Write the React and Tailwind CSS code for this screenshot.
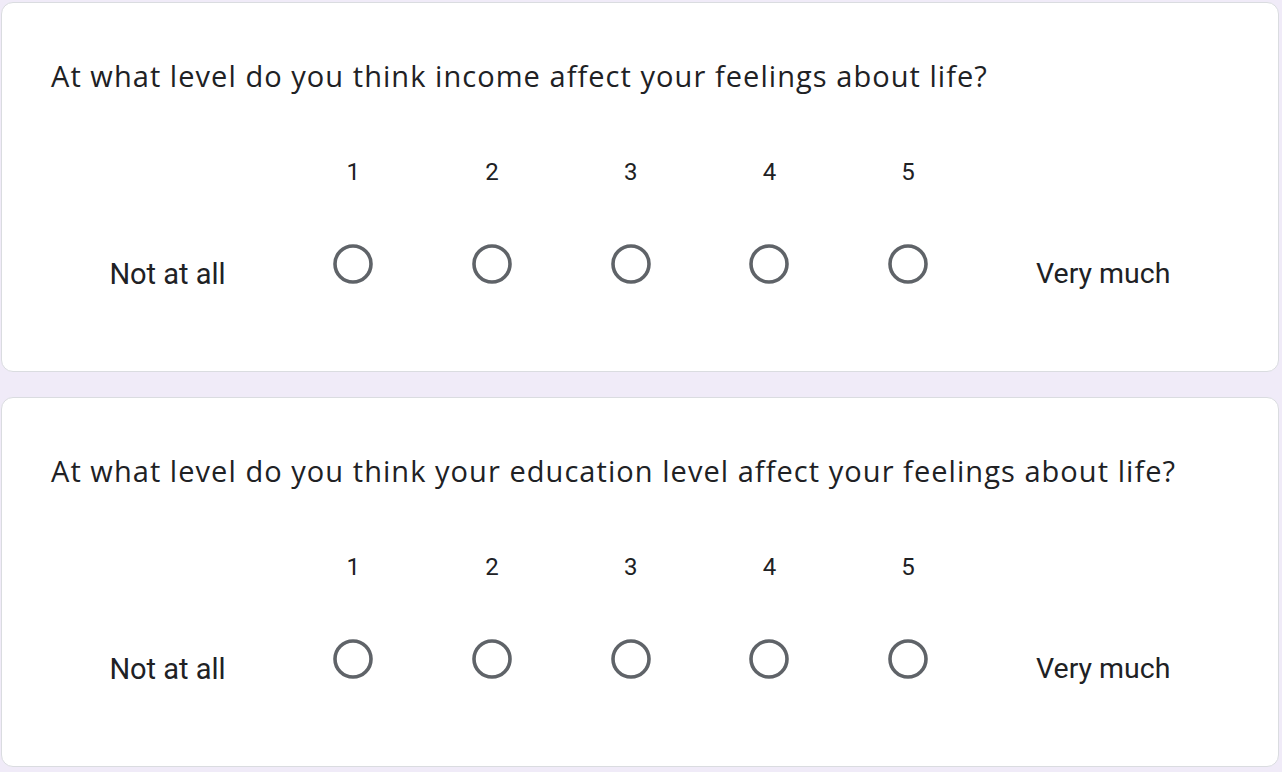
import React from "react";

const questions = [
    "At what level do you think income affect your feelings about life?",
    "At what level do you think your education level affect your feelings about life?",
];

function Radio() {
    return (
        <svg width="40" height="40" viewBox="0 0 40 40" className="block">
            <circle cx="20" cy="20" r="18" fill="none" stroke="#5f6368" strokeWidth="3.6" />
        </svg>
    );
}

function ScaleCard({ title }) {
    return (
        <div className="bg-white border border-[#dadce0] rounded-xl px-[49px] pt-[53px] pb-[81px]">
            <div className="text-[29px] leading-[40px] tracking-[1.05px] text-[#202124] font-['Open_Sans',sans-serif]">{title}</div>
            <div className="flex items-start mt-[60px] font-['Roboto',sans-serif] text-[#202124]">
                <div className="w-[233px] pt-[102px] text-[29px] leading-[32px] text-center">Not at all</div>
                {[1, 2, 3, 4, 5].map((n) => (
                    <div key={n} className="w-[138.7px] flex flex-col items-center">
                        <div className="text-[24px] leading-[32px]">{n}</div>
                        <div className="mt-[56px]">
                            <Radio />
                        </div>
                    </div>
                ))}
                <div className="flex-1 pt-[102px] text-[28.5px] leading-[32px] text-center">Very much</div>
            </div>
        </div>
    );
}

export default function App() {
    return (
        <div className="min-h-screen bg-[#f0ebf8] pt-[2px] pl-[1px] pr-[3px] pb-[4px]">
            <ScaleCard title={questions[0]} />
            <div className="mt-[25px]">
                <ScaleCard title={questions[1]} />
            </div>
        </div>
    );
}
